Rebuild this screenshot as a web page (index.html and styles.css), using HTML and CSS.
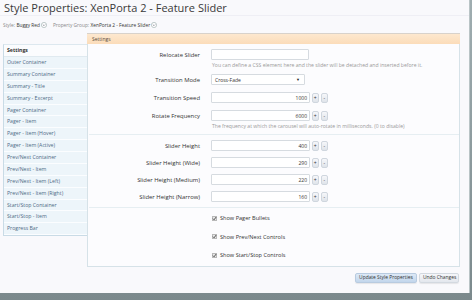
FILE: index.html
```html
<!DOCTYPE html>
<html>
<head>
<meta charset="utf-8">
<link rel="stylesheet" href="styles.css">
</head>
<body>
<div class="page">
  <header class="head">
    <h1 class="title">Style Properties: XenPorta 2 - Feature Slider</h1>
  </header>
  <div class="crumbs">
    <span class="crumb-label">Style:</span>
    <span class="crumb-value">Buggy Red</span>
    <span class="crumb-menu"><svg viewBox="0 0 6 6" width="6" height="6"><circle cx="3" cy="3" r="2.6" fill="#fff" stroke="#9aa" stroke-width="0.6"/><path d="M1.8 2.5 L3 3.7 L4.2 2.5" fill="none" stroke="#667" stroke-width="0.6"/></svg></span>
    <span class="crumb-label crumb-gap">Property Group:</span>
    <span class="crumb-value">XenPorta 2 - Feature Slider</span>
    <span class="crumb-menu"><svg viewBox="0 0 6 6" width="6" height="6"><circle cx="3" cy="3" r="2.6" fill="#fff" stroke="#9aa" stroke-width="0.6"/><path d="M1.8 2.5 L3 3.7 L4.2 2.5" fill="none" stroke="#667" stroke-width="0.6"/></svg></span>
  </div>
  <div class="layout">
    <nav class="side">
      <div class="side-head">Settings</div>
      <div class="side-item">Outer Container</div>
      <div class="side-item">Summary Container</div>
      <div class="side-item">Summary - Title</div>
      <div class="side-item">Summary - Excerpt</div>
      <div class="side-item">Pager Container</div>
      <div class="side-item">Pager - Item</div>
      <div class="side-item">Pager - Item (Hover)</div>
      <div class="side-item">Pager - Item (Active)</div>
      <div class="side-item">Prev/Next Container</div>
      <div class="side-item">Prev/Next - Item</div>
      <div class="side-item">Prev/Next - Item (Left)</div>
      <div class="side-item">Prev/Next - Item (Right)</div>
      <div class="side-item">Start/Stop Container</div>
      <div class="side-item">Start/Stop - Item</div>
      <div class="side-item">Progress Bar</div>
    </nav>
    <div class="main">
      <div class="bar">Settings</div>
      <div class="panel">
        <div class="group group-first">
          <div class="row">
            <div class="label">Relocate Slider</div>
            <div class="ctrl"><span class="input text"></span></div>
          </div>
          <div class="hint">You can define a CSS element here and the slider will be detached and inserted before it.</div>
          <div class="row row-mode">
            <div class="label">Transition Mode</div>
            <div class="ctrl"><span class="input select"><span>Cross-Fade</span><span class="arrow">▼</span></span></div>
          </div>
          <div class="row row-gap">
            <div class="label">Transition Speed</div>
            <div class="ctrl"><span class="input num">1000</span><span class="spin">+</span><span class="spin">-</span></div>
          </div>
          <div class="row row-gap">
            <div class="label">Rotate Frequency</div>
            <div class="ctrl"><span class="input num">6000</span><span class="spin">+</span><span class="spin">-</span></div>
          </div>
          <div class="hint">The frequency at which the carousel will auto-rotate in milliseconds. (0 to disable)</div>
        </div>
        <div class="group group-heights">
          <div class="row">
            <div class="label">Slider Height</div>
            <div class="ctrl"><span class="input num">400</span><span class="spin">+</span><span class="spin">-</span></div>
          </div>
          <div class="row row-h">
            <div class="label">Slider Height (Wide)</div>
            <div class="ctrl"><span class="input num">290</span><span class="spin">+</span><span class="spin">-</span></div>
          </div>
          <div class="row row-h">
            <div class="label">Slider Height (Medium)</div>
            <div class="ctrl"><span class="input num">220</span><span class="spin">+</span><span class="spin">-</span></div>
          </div>
          <div class="row row-h">
            <div class="label">Slider Height (Narrow)</div>
            <div class="ctrl"><span class="input num">160</span><span class="spin">+</span><span class="spin">-</span></div>
          </div>
        </div>
        <div class="group group-checks">
          <div class="check"><span class="box"><svg viewBox="0 0 6 6" width="5" height="5"><path d="M1.2 3.2 L2.5 4.5 L4.9 1.3" fill="none" stroke="#333" stroke-width="1"/></svg></span>Show Pager Bullets</div>
          <div class="check"><span class="box"><svg viewBox="0 0 6 6" width="5" height="5"><path d="M1.2 3.2 L2.5 4.5 L4.9 1.3" fill="none" stroke="#333" stroke-width="1"/></svg></span>Show Prev/Next Controls</div>
          <div class="check"><span class="box"><svg viewBox="0 0 6 6" width="5" height="5"><path d="M1.2 3.2 L2.5 4.5 L4.9 1.3" fill="none" stroke="#333" stroke-width="1"/></svg></span>Show Start/Stop Controls</div>
        </div>
      </div>
      <div class="actions">
        <span class="btn btn-primary">Update Style Properties</span>
        <span class="btn">Undo Changes</span>
      </div>
    </div>
  </div>
</div>
</body>
</html>
```

FILE: styles.css
```css
html {
  background: linear-gradient(#9fadb0, #7b898c);
}
body {
  margin: 0;
  width: 472px;
  height: 300px;
  overflow: hidden;
  font-family: "Open Sans", "Liberation Sans", sans-serif;
  color: #333;
}
.page {
  width: 469px;
  height: 293px;
  background: #f9f9fc;
  box-shadow: 1px 0 0 #b9c4c6;
}
.head {
  height: 15px;
  border-bottom: 1px solid #efeff5;
}
.title {
  margin: 0;
  padding-left: 4px;
  font-size: 11px;
  line-height: 15px;
  font-weight: normal;
  color: #3a3a3a;
  white-space: nowrap;
}
.crumbs {
  height: 17px;
  padding-left: 3px;
  display: flex;
  align-items: center;
  font-size: 4.8px;
  white-space: nowrap;
}
.crumb-label { color: #888; margin-right: 1.5px; }
.crumb-value { color: #333; }
.crumb-gap { margin-left: 6px; }
.crumb-menu { display: flex; margin-left: 1px; }
.layout {
  display: flex;
  padding-left: 3px;
}
.side {
  width: 83px;
  margin-top: 11px;
  border: 1px solid #c9dbe6;
  border-top: 1px solid #dde8ef;
  border-right: none;
  background: #edf5fa;
  font-size: 5.2px;
  color: #4e6a85;
  align-self: flex-start;
}
.side-head {
  height: 11px;
  line-height: 11px;
  padding-left: 3px;
  background: #fbfcfe;
  font-weight: bold;
  color: #333;
  border-bottom: 1px solid #e0eaf0;
}
.side-item {
  height: 10.88px;
  line-height: 10.88px;
  padding-left: 3px;
  border-bottom: 1px solid #fbfdff;
  white-space: nowrap;
}
.main {
  width: 373px;
}
.bar {
  height: 10px;
  line-height: 10px;
  border-top: 1px solid #d8d2cb;
  background: linear-gradient(#fde8cf, #fbdcb9);
  padding-left: 5px;
  font-size: 5px;
  color: #5a4a3a;
}
.panel {
  height: 222px;
  border: 1px solid #d6e2e8;
  border-top: none;
  background: #fcfcfe;
}
.group {
  border-bottom: 1px solid #e6eef2;
  margin: 0 0 0 1px;
}
.group-first {
  padding: 5px 0 4px;
}
.group-heights {
  padding: 5px 0 5px;
}
.group-checks {
  border-bottom: none;
  padding: 6px 0 0;
}
.row {
  display: flex;
  align-items: center;
  height: 11px;
}
.row-mode { margin-top: 5px; }
.row-gap { margin-top: 7px; }
.row-h { margin-top: 6px; }
.label {
  width: 111px;
  margin-right: 11px;
  text-align: right;
  font-size: 5.9px;
  color: #333;
  white-space: nowrap;
}
.ctrl {
  display: flex;
  align-items: center;
}
.input {
  box-sizing: border-box;
  height: 11px;
  border: 1px solid #d6dbe0;
  border-radius: 1px;
  background: #fff;
  font-size: 5px;
  color: #333;
  display: flex;
  align-items: center;
}
.text { width: 98px; }
.select {
  width: 94px;
  justify-content: space-between;
  padding: 0 4px 0 3px;
}
.arrow { font-size: 4px; color: #222; }
.num {
  width: 99px;
  justify-content: flex-end;
  padding-right: 2px;
}
.spin {
  box-sizing: border-box;
  width: 7.5px;
  height: 10px;
  margin-left: 1.5px;
  border: 1px solid #cfd6de;
  border-radius: 2px;
  background: linear-gradient(#f6f7fa, #dfe4ea);
  font-size: 5px;
  line-height: 8px;
  text-align: center;
  color: #333;
}
.hint {
  margin: 1px 0 0 123px;
  height: 8px;
  line-height: 8px;
  font-size: 5.1px;
  color: #9a9a9a;
  white-space: nowrap;
}
.check {
  display: flex;
  align-items: center;
  height: 8px;
  margin-left: 123px;
  margin-bottom: 10.6px;
  font-size: 5.6px;
  color: #333;
}
.box {
  box-sizing: border-box;
  width: 5px;
  height: 5px;
  margin-right: 3px;
  border: 1px solid #b8b8b8;
  background: #e9e9e9;
  display: flex;
  align-items: center;
  justify-content: center;
}
.box svg { flex: none; }
.actions {
  display: flex;
  justify-content: flex-end;
  gap: 2px;
  margin-top: 6px;
  padding-right: 1px;
}
.btn {
  box-sizing: border-box;
  height: 9.5px;
  padding: 0 3px;
  border-radius: 2px;
  border: 1px solid #d3d9e0;
  background: linear-gradient(#f5f6f9, #e3e7ed);
  font-size: 4.9px;
  line-height: 7.5px;
  color: #333;
  box-shadow: 0 1px 1px rgba(0,0,0,0.08);
  white-space: nowrap;
}
.btn-primary {
  width: 62px;
  text-align: center;
  border-color: #b8cbe0;
  background: linear-gradient(#dde9f6, #c2d6ec);
}
.btn:last-child {
  width: 40px;
  text-align: center;
}
```
